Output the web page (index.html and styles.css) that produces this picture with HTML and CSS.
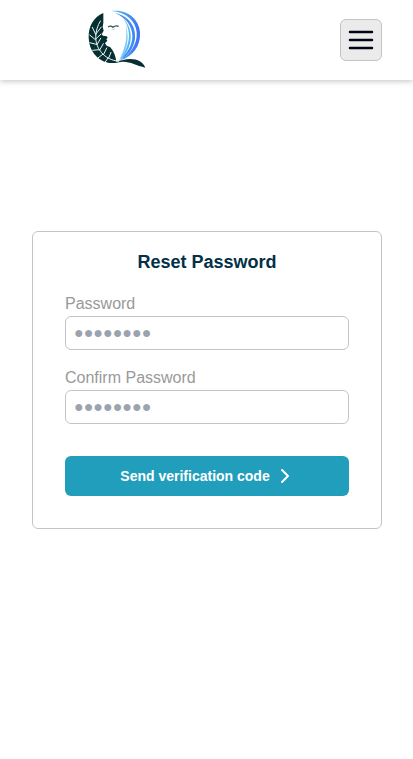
FILE: index.html
```html
<!DOCTYPE html>
<html lang="en">
<head>
<meta charset="utf-8">
<meta name="viewport" content="width=device-width, initial-scale=1">
<title>Reset Password</title>
<link rel="stylesheet" href="styles.css">
</head>
<body>
<header class="header">
  <a class="logo" href="#" aria-label="Home">
    <svg width="74" height="70" viewBox="0 0 222 210" aria-hidden="true">
      <defs>
        <linearGradient id="arc" x1="0" y1="0" x2="1" y2="0">
          <stop offset="0" stop-color="#58c4f2"/>
          <stop offset="0.5" stop-color="#4b9cf3"/>
          <stop offset="1" stop-color="#3c6ef4"/>
        </linearGradient>
      </defs>
      <path fill="url(#arc)" d="M94 21C142 14 178 46 180 86C182 127 158 157 121 169C151 149 173 121 170 85C167 51 140 25 94 21Z"/>
      <path fill="#418bf2" d="M106 28C148 36 169 70 165 104C161 133 145 154 120 168C142 146 157 125 157 97C157 67 138 41 106 28Z"/>
      <path fill="#50b7f6" d="M124 37C149 59 156 90 151 113C147 136 134 155 119 168C133 147 146 125 147 96C147 72 138 51 124 37Z"/>
      <path fill="#78c8f7" d="M136 57C145 86 145 113 137 134C132 149 126 159 118 168C127 149 138 124 139 96C140 80 139 68 136 57Z"/>
      <path fill="#062f32" d="M70 27C40 39 25 68 26 101C27 139 50 168 84 176C97 179 111 176 123 174C147 171 168 185 196 191C190 174 173 165 151 165C136 165 122 170 109 173C107 157 102 142 91 130L80 125L75 118L82 110L79 106L83 101L80 97L69 95L65 91L71 80L68 68L70 57Z"/>
      <path fill="none" stroke="#edf4f2" stroke-width="3" stroke-linecap="round" d="M61 51C43 81 41 119 64 145C77 161 94 169 116 172M47 91L37 70M45 106L29 93M49 121L29 116M57 137L38 139M69 150L54 162M84 162L75 175M47 91L64 69M46 106L63 90M51 122L62 103M59 138L70 119M71 151L80 132M86 162L93 145"/>
      <path fill="none" stroke="#285c55" stroke-width="4" d="M84 69Q92 63 99 70Q106 63 116 67"/>
      <path fill="none" stroke="#a8b9b7" stroke-width="2" d="M95 75L101 77L105 74"/>
    </svg>
  </a>
  <button class="menu" type="button" aria-label="Open menu">
    <svg width="32" height="32" viewBox="0 0 32 32" aria-hidden="true">
      <path d="M5 8H27M5 16H27M5 24H27" fill="none" stroke="#020617" stroke-width="2.5" stroke-linecap="round"/>
    </svg>
  </button>
</header>
<main class="main">
  <form class="card">
    <h1 class="title">Reset Password</h1>
    <div class="field">
      <label for="password">Password</label>
      <input id="password" type="password" placeholder="●●●●●●●●">
    </div>
    <div class="field">
      <label for="confirm">Confirm Password</label>
      <input id="confirm" type="password" placeholder="●●●●●●●●">
    </div>
    <button class="submit" type="submit">
      <span>Send verification code</span>
      <svg width="16" height="16" viewBox="0 0 16 16" aria-hidden="true">
        <path d="M4 2L10 8L4 14" fill="none" stroke="#fff" stroke-width="2" stroke-linecap="round" stroke-linejoin="round"/>
      </svg>
    </button>
  </form>
</main>
</body>
</html>
```
FILE: styles.css
```css
* {
  box-sizing: border-box;
}

body {
  margin: 0;
  background: #fff;
  font-family: "Liberation Sans", Arial, sans-serif;
  font-size: 16px;
  line-height: 24px;
}

.header {
  display: flex;
  align-items: center;
  justify-content: space-between;
  height: 80px;
  padding: 0 31px 2px 80px;
  background: #fff;
  box-shadow: 0 1px 6px rgba(0, 0, 0, 0.25);
}

.logo,
.logo svg,
.menu svg {
  display: block;
}

.menu {
  display: flex;
  align-items: center;
  justify-content: center;
  width: 42px;
  height: 42px;
  margin-top: 2px;
  padding: 0;
  border: 1px solid #c4c4c4;
  border-radius: 6px;
  background: #ebebeb;
}

.main {
  padding: 151px 31px 32px 32px;
}

.card {
  display: flex;
  flex-direction: column;
  gap: 16px;
  max-width: 350px;
  margin: 0 auto;
  padding: 16px 32px 32px;
  border: 1px solid #c4c4c4;
  border-radius: 6px;
  background: #fff;
}

.title {
  margin: 0;
  color: #023047;
  font-size: 18px;
  line-height: 28px;
  text-align: center;
}

.field {
  display: flex;
  flex-direction: column;
}

.field label {
  color: #999;
}

.field input {
  width: 100%;
  height: 34px;
  padding: 0 8px;
  border: 1px solid #c4c4c4;
  border-radius: 6px;
  background: #fff;
  font: inherit;
}

.field input::placeholder {
  color: #9ca3af;
  opacity: 1;
}

.submit {
  display: flex;
  align-items: center;
  justify-content: center;
  gap: 8px;
  height: 40px;
  margin-top: 16px;
  padding: 0 16px;
  border: 0;
  border-radius: 6px;
  background: #219ebc;
  color: #fff;
  font: bold 14px/20px "Liberation Sans", Arial, sans-serif;
}
```
